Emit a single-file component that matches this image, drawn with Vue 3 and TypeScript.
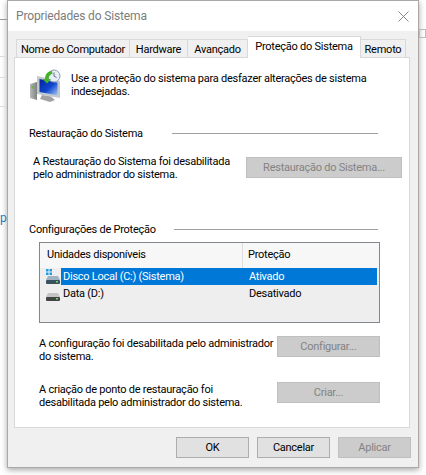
<script setup lang="ts">
const tabs = [
  { label: 'Nome do Computador', w: 114, active: false },
  { label: 'Hardware', w: 58, active: false },
  { label: 'Avançado', w: 60, active: false },
  { label: 'Proteção do Sistema', w: 113, active: true },
  { label: 'Remoto', w: 45, active: false },
]
</script>

<template>
  <div class="desk">
    <div class="backdrop-letter">p</div>
    <div class="backdrop-line l1"></div>
    <div class="backdrop-line l2"></div>
    <div class="backdrop-line l3"></div>
    <div class="backdrop-line l4"></div>
    <div class="right-mark"></div>
    <section class="win">
      <header class="titlebar">
        <span class="title">Propriedades do Sistema</span>
        <svg class="close" width="11" height="11" viewBox="0 0 11 11"><path d="M.5.5l10 10M10.5.5l-10 10" stroke="#8a8a8a" stroke-width="1" fill="none"/></svg>
      </header>
      <div class="body">
        <nav class="tabs">
          <div v-for="t in tabs" :key="t.label" class="tab" :class="{ active: t.active }" :style="{ width: t.w + 'px' }">{{ t.label }}</div>
        </nav>
        <div class="panel">
          <div class="intro">
            <svg class="shield" width="32" height="36" viewBox="0 0 32 36">
              <defs>
                <linearGradient id="scr" x1="0" y1="0" x2="1" y2="1"><stop offset="0" stop-color="#06209a"/><stop offset=".55" stop-color="#0f47cf"/><stop offset="1" stop-color="#a8c8f0"/></linearGradient>
                <linearGradient id="tower" x1="0" y1="0" x2="1" y2="0"><stop offset="0" stop-color="#b8bcb8"/><stop offset="1" stop-color="#7e8280"/></linearGradient>
              </defs>
              <path d="M1 15l7-2v18l-7-2z" fill="url(#tower)"/>
              <rect x="2.500" y="17" width="2.500" height="2.500" fill="#6fae4a"/>
              <path d="M8 7l23 5v17L8 25z" fill="#c2c8d0"/>
              <path d="M10.500 10l18 3.800v12.500L10.500 23z" fill="url(#scr)"/>
              <path d="M13 26l9 1.500 4 3.500-5 2-10-3z" fill="#a2a2a2"/>
              <circle cx="25" cy="7" r="6" fill="#e6edf5" stroke="#8aa0b8"/>
              <path d="M25 3.500V7l2.500 1.500" stroke="#5f7288" fill="none"/>
              <path d="M16 10c0-5 3-8 7-8l.5 3c-2 0-4 2-4 5l2.500 0-4 4.500-4.500-4.500z" fill="#46b12c"/>
            </svg>
            <p class="txt">Use a proteção do sistema para desfazer alterações de sistema<br>indesejadas.</p>
          </div>

          <div class="heading h-first"><span>Restauração do Sistema</span><i class="rule r1"></i></div>
          <div class="row-restore">
            <p class="txt">A Restauração do Sistema foi desabilitada<br>pelo administrador do sistema.</p>
            <button class="btn off wide" disabled>Restauração do Sistema...</button>
          </div>

          <div class="heading"><span>Configurações de Proteção</span><i class="rule r2"></i></div>

          <div class="list">
            <div class="lhead">
              <div class="c1">Unidades disponíveis</div>
              <div class="c2">Proteção</div>
            </div>
            <div class="lrow">
              <svg class="drive" width="16" height="17" viewBox="0 0 16 17">
                <path d="M1 1h2.500v2.500H1zM4.500 1H7v2.500H4.500zM1 4.500h2.500V7H1zM4.500 4.500H7V7H4.500z" fill="#1e9be8"/>
                <path d="M3 8h10l2 4H1z" fill="#9fb4c0"/>
                <rect x="1" y="12" width="14" height="4" rx="1" fill="#39505f"/>
                <rect x="11" y="13" width="2" height="1.500" fill="#5fe05f"/>
              </svg>
              <div class="c1t sel">Disco Local (C:) (Sistema)</div>
              <div class="c2t sel">Ativado</div>
            </div>
            <div class="lrow">
              <svg class="drive" width="16" height="17" viewBox="0 0 16 17">
                <path d="M3 8h10l2 4H1z" fill="#c4c4c4"/>
                <rect x="1" y="12" width="14" height="4" rx="1" fill="#444"/>
                <rect x="11" y="13" width="2" height="1.500" fill="#5fe05f"/>
              </svg>
              <div class="c1t">Data (D:)</div>
              <div class="c2t">Desativado</div>
            </div>
          </div>

          <div class="row-action first">
            <p class="txt">A configuração foi desabilitada pelo administrador<br>do sistema.</p>
            <button class="btn off mid" disabled>Configurar...</button>
          </div>
          <div class="row-action second">
            <p class="txt">A criação de ponto de restauração foi<br>desabilitada pelo administrador do sistema.</p>
            <button class="btn off mid" disabled>Criar...</button>
          </div>
        </div>
        <footer class="foot">
          <button class="btn">OK</button>
          <button class="btn">Cancelar</button>
          <button class="btn off" disabled>Aplicar</button>
        </footer>
      </div>
    </section>
  </div>
</template>

<style>
html, body { margin: 0; background: #fff; }
</style>

<style scoped>
.desk {
  position: relative;
  width: 426px;
  height: 475px;
  overflow: hidden;
  background: #fff;
  font-family: Roboto, "Liberation Sans", sans-serif;
  font-size: 11px;
  letter-spacing: -0.25px;
  color: #000;
  padding-left: 7px;
  box-sizing: border-box;
}
.backdrop-letter { position: absolute; left: 0; top: 211px; color: #1a7ac4; font-size: 12px; line-height: 14px; }
.backdrop-line { position: absolute; left: 0; width: 7px; height: 1px; background: #dcdcdc; }
.l1 { top: 19px; background: #9a9a9a; }
.l2 { top: 56px; }
.l3 { top: 77px; }
.l4 { top: 106px; }
.right-mark { position: absolute; left: 419px; top: 29px; width: 7px; height: 9px; border: 1px solid #bbb; box-sizing: border-box; }
.win {
  width: 412px;
  height: 468px;
  box-sizing: border-box;
  background: #f0f0f0;
  border: 1px solid #a8a8a8;
  box-shadow: 0 2px 6px rgba(0,0,0,.35);
  display: flex;
  flex-direction: column;
}
.titlebar {
  height: 30px;
  flex: none;
  background: #fff;
  display: flex;
  align-items: center;
  justify-content: space-between;
  padding: 0 9px 0 8px;
}
.title { font-size: 12px; letter-spacing: -0.15px; color: #7c7c7c; }
.body { flex: 1; display: flex; flex-direction: column; padding: 7px 8px 0 6px; }
.tabs { display: flex; align-items: flex-end; height: 20px; padding-left: 2px; margin-bottom: -1px; position: relative; z-index: 1; }
.tab {
  height: 19px;
  box-sizing: border-box;
  background: #f0f0f0;
  border: 1px solid #d9d9d9;
  border-left-width: 0;
  text-align: center;
  line-height: 20px;
  white-space: nowrap;
}
.tab:first-child { border-left-width: 1px; }
.tab.active {
  height: 22px;
  background: #fff;
  border-bottom: 0;
  line-height: 19px;
}
.panel {
  height: 371px;
  box-sizing: border-box;
  background: #fff;
  border: 1px solid #d9d9d9;
  display: flex;
  flex-direction: column;
}
.txt { margin: 0; line-height: 13px; white-space: nowrap; }
.intro { display: flex; height: 65px; padding: 11px 0 0 14px; box-sizing: border-box; }
.intro .txt { margin-top: 3px; }
.shield { flex: none; margin-right: 10px; }
.heading { display: flex; align-items: center; padding-left: 14px; height: 14px; white-space: nowrap; }
.rule { display: block; height: 1px; background: #a0a0a0; }
.h-first { margin-top: 3px; }
.r1 { margin-left: auto; width: 206px; margin-right: 31px; }
.r2 { margin-left: auto; width: 204px; margin-right: 31px; }
.row-restore { display: flex; justify-content: space-between; height: 82px; padding: 15px 7px 0 18px; box-sizing: border-box; }
.btn {
  width: 73px;
  height: 21px;
  box-sizing: border-box;
  border: 1px solid #adadad;
  background: #e1e1e1;
  font: inherit;
  letter-spacing: inherit;
  color: #000;
  padding: 0;
  flex: none;
}
.btn.off { background: #cccccc; border-color: #bfbfbf; color: #838383; }
.btn.wide { width: 156px; margin-top: 2px; }
.btn.mid { width: 103px; }
.list {
  margin: 6px 0 0 24px;
  width: 341px;
  height: 81px;
  box-sizing: border-box;
  border: 1px solid #828790;
  background: #eeeeee;
}
.lhead { display: flex; height: 25px; background: #f7f7f7; line-height: 24px; }
.c1 { width: 203px; padding-left: 7px; box-sizing: border-box; border-right: 1px solid #dedede; }
.c2 { padding-left: 5px; }
.lrow { display: flex; height: 17px; line-height: 17px; width: 337px; }
.drive { flex: none; margin: 0 0 0 5px; }
.c1t { width: 187px; box-sizing: border-box; padding-left: 2px; flex: none; white-space: nowrap; }
.c2t { flex: 1; padding-left: 1px; }
.sel { background: #0078d7; color: #fff; }
.row-action { display: flex; justify-content: space-between; padding: 0 29px 0 24px; align-items: flex-start; }
.row-action .txt { margin-top: 1px; }
.row-action.first { margin-top: 13px; }
.row-action.second { margin-top: 19px; }
.foot { display: flex; justify-content: flex-end; gap: 8px; margin-top: 9px; margin-right: -1px; }
</style>
